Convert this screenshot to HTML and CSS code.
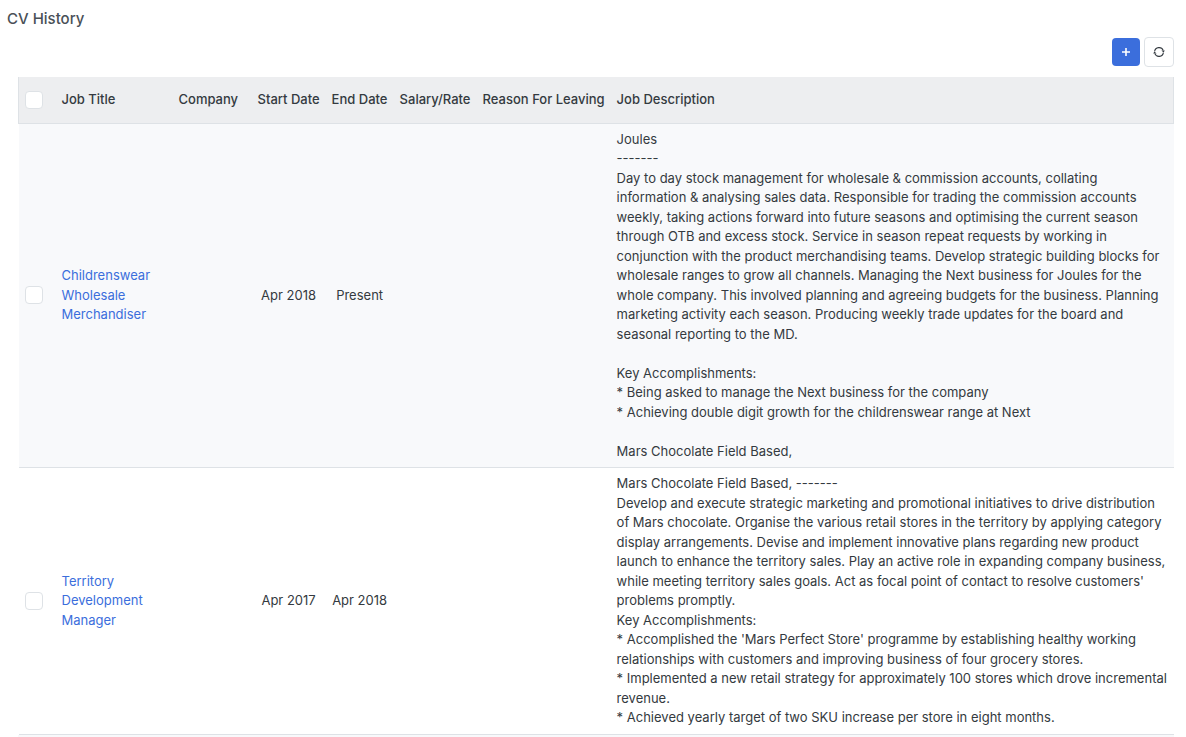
FILE: index.html
```html
<!DOCTYPE html>
<html lang="en">
<head>
    <meta charset="UTF-8">
    <meta name="viewport" content="width=device-width, initial-scale=1.0">
    <title>CV History</title>
    <link rel="stylesheet" href="styles.css">
</head>
<body>
    <h1 class="page-title">CV History</h1>

    <div class="toolbar">
        <button type="button" class="btn btn-primary" aria-label="Add">
            <svg width="10" height="10" viewBox="0 0 10 10" fill="none" stroke="currentColor" stroke-width="1.6">
                <path d="M5 1v8M1 5h8"/>
            </svg>
        </button>
        <button type="button" class="btn btn-default" aria-label="Refresh">
            <svg width="12" height="12" viewBox="0 0 12 12" fill="none" stroke="currentColor" stroke-width="1.1">
                <path d="M1.6 5.4A4.5 4.5 0 0 1 10.2 4.4M10.4 6.6A4.5 4.5 0 0 1 1.8 7.6"/>
                <path d="M8.4 4.4h3.4L10.6 6.4zM.2 7.6h3.4L1.4 5.6z" fill="currentColor" stroke="none"/>
            </svg>
        </button>
    </div>

    <table class="history">
        <thead>
            <tr>
                <th class="col-check"><input type="checkbox" class="check" aria-label="Select all"></th>
                <th class="col-title">Job Title</th>
                <th class="col-company">Company</th>
                <th class="col-start">Start Date</th>
                <th class="col-end">End Date</th>
                <th class="col-salary">Salary/Rate</th>
                <th class="col-reason">Reason For Leaving</th>
                <th>Job Description</th>
            </tr>
        </thead>
        <tbody>
            <tr>
                <td><input type="checkbox" class="check" aria-label="Select Childrenswear Wholesale Merchandiser"></td>
                <td><a href="#">Childrenswear Wholesale Merchandiser</a></td>
                <td></td>
                <td class="date">Apr 2018</td>
                <td class="date">Present</td>
                <td></td>
                <td></td>
                <td>
                    Joules<br>
                    -------<br>
                    Day to day stock management for wholesale &amp; commission accounts, collating information &amp; analysing sales data. Responsible for trading the commission accounts weekly, taking actions forward into future seasons and optimising the current season through OTB and excess stock. Service in season repeat requests by working in conjunction with the product merchandising teams. Develop strategic building blocks for wholesale ranges to grow all channels. Managing the Next business for Joules for the whole company. This involved planning and agreeing budgets for the business. Planning marketing activity each season. Producing weekly trade updates for the board and seasonal reporting to the MD.<br>
                    <br>
                    Key Accomplishments:<br>
                    * Being asked to manage the Next business for the company<br>
                    * Achieving double digit growth for the childrenswear range at Next<br>
                    <br>
                    Mars Chocolate Field Based,
                </td>
            </tr>
            <tr>
                <td><input type="checkbox" class="check" aria-label="Select Territory Development Manager"></td>
                <td><a href="#">Territory Development Manager</a></td>
                <td></td>
                <td class="date">Apr 2017</td>
                <td class="date">Apr 2018</td>
                <td></td>
                <td></td>
                <td>
                    Mars Chocolate Field Based, -------<br>
                    Develop and execute strategic marketing and promotional initiatives to drive distribution of Mars chocolate. Organise the various retail stores in the territory by applying category display arrangements. Devise and implement innovative plans regarding new product launch to enhance the territory sales. Play an active role in expanding company business, while meeting territory sales goals. Act as focal point of contact to resolve customers' problems promptly.<br>
                    Key Accomplishments:<br>
                    * Accomplished the 'Mars Perfect Store' programme by establishing healthy working relationships with customers and improving business of four grocery stores.<br>
                    * Implemented a new retail strategy for approximately 100 stores which drove incremental revenue.<br>
                    * Achieved yearly target of two SKU increase per store in eight months.
                </td>
            </tr>
        </tbody>
    </table>
    <div class="table-end"></div>
</body>
</html>
```

FILE: styles.css
```css
* {
    box-sizing: border-box;
}
body {
    margin: 0;
    padding: 8px 12px 0 18px;
    font-family: Inter, "Liberation Sans", sans-serif;
    font-size: 13px;
    line-height: 1.5;
    color: #343a40;
    background: #fff;
}
.page-title {
    margin: 0 0 8px -11px;
    font-size: 15px;
    line-height: 21px;
    font-weight: 500;
    color: #495057;
}
.toolbar {
    display: flex;
    justify-content: flex-end;
    align-items: center;
    gap: 4px;
    margin-bottom: 10px;
}
.btn {
    display: flex;
    align-items: center;
    justify-content: center;
    padding: 0;
    border-radius: 4px;
    cursor: pointer;
}
.btn-primary {
    width: 28px;
    height: 28px;
    border: none;
    background: #3b6edc;
    color: #fff;
}
.btn-default {
    width: 30px;
    height: 30px;
    border: 1px solid #dee2e6;
    background: #fff;
    color: #343a40;
}
.history {
    width: 100%;
    border-collapse: collapse;
}
.history th,
.history td {
    padding: 6px;
    text-align: left;
    vertical-align: middle;
    border-bottom: 1px solid #dee2e6;
}
.history th {
    height: 46px;
    font-weight: 500;
    white-space: nowrap;
    background: #edeef0;
}
.history th:first-child {
    border-left: 1px solid #dee2e6;
}
.history th:last-child {
    border-right: 1px solid #dee2e6;
}
.history tbody tr:nth-child(odd),
.table-end {
    background: #f8f9fb;
}
.history .date {
    text-align: center;
}
.history a {
    color: #3b6edc;
    text-decoration: none;
}
.col-check {
    width: 37px;
}
.col-title {
    width: 117px;
}
.col-company {
    width: 79px;
}
.col-start {
    width: 74px;
}
.col-end {
    width: 68px;
}
.col-salary {
    width: 83px;
}
.col-reason {
    width: 134px;
}
.check {
    appearance: none;
    display: block;
    width: 18px;
    height: 18px;
    margin: 0;
    border: 1px solid #dee2e6;
    border-radius: 4px;
    background: #fff;
}
.check:checked {
    background: #3b6edc;
}
.table-end {
    height: 2px;
}
```
